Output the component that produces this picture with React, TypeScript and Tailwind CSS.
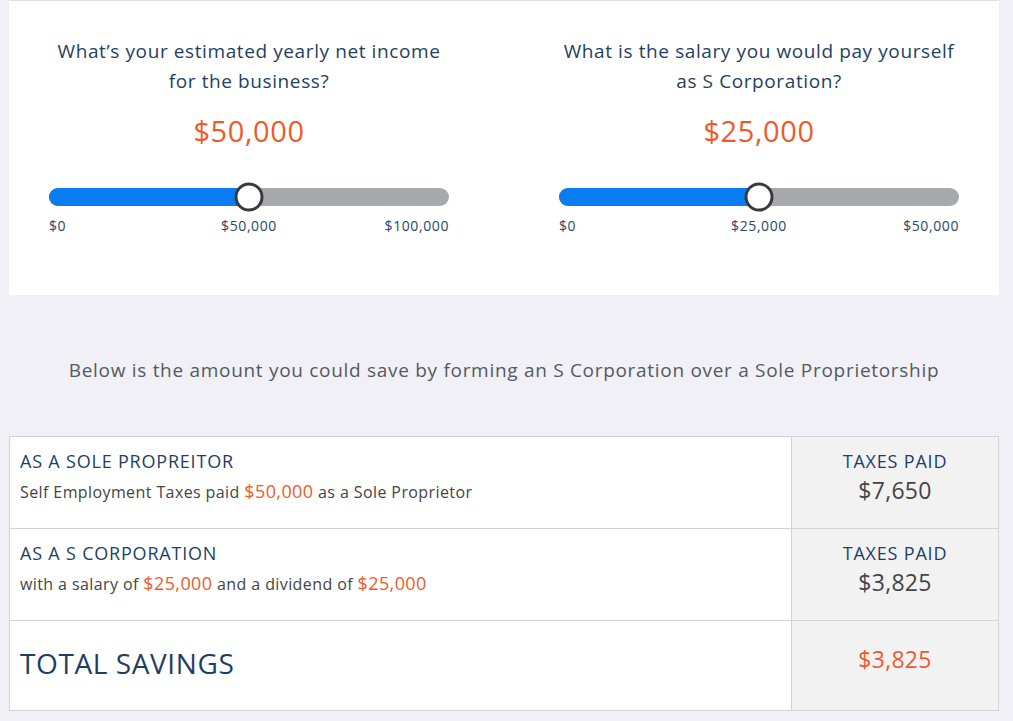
import React from "react";

const navy = "text-[#1e3f63]";

function Slider({ min, mid, max }: { min: string; mid: string; max: string }) {
  return (
    <div className="w-[400px] mt-[39px]">
      <div className="relative h-[18px] w-full rounded-full bg-[#a7a9ac]">
        <div className="absolute left-0 top-0 h-full w-1/2 rounded-l-full bg-[#0a7cf2]" />
        <div className="absolute left-1/2 top-1/2 h-[29px] w-[29px] -translate-x-1/2 -translate-y-1/2 rounded-full border-[3px] border-[#3a3a3a] bg-white" />
      </div>
      <div className="relative mt-[11px] h-[18px] text-[14px] leading-[18px] tracking-[0.6px] text-[#2a4668]">
        <span className="absolute left-0">{min}</span>
        <span className="absolute left-1/2 -translate-x-1/2">{mid}</span>
        <span className="absolute right-0">{max}</span>
      </div>
    </div>
  );
}

function Question({ lines, amount, min, mid, max }: { lines: [string, string]; amount: string; min: string; mid: string; max: string }) {
  return (
    <div className="flex flex-col items-center pt-[35px]">
      <div className={`text-center text-[19px] leading-[30px] tracking-[0.6px] whitespace-nowrap ${navy}`}>
        {lines[0]}
        <br />
        {lines[1]}
      </div>
      <div className="mt-[17px] text-[29px] leading-[36px] tracking-[0.6px] text-[#f05a2b]">{amount}</div>
      <Slider min={min} mid={mid} max={max} />
    </div>
  );
}

const O = ({ children }: { children: React.ReactNode }) => (
  <span className="text-[18px] text-[#f05a2b]">{children}</span>
);

function TaxCell({ value }: { value: string }) {
  return (
    <div className="border-l border-[#d3d3da] bg-[#f2f2f3] pt-[13px] text-center">
      <div className={`text-[18px] leading-[22px] tracking-[0.8px] ${navy}`}>TAXES PAID</div>
      <div className="mt-[3px] text-[23px] leading-[30px] tracking-[0.3px] text-[#444]">{value}</div>
    </div>
  );
}

export default function App() {
  return (
    <div
      className="h-[721px] w-[1013px] bg-[#f0f0f6] px-[9px]"
      style={{ fontFamily: "'Open Sans', Lato, sans-serif" }}
    >
      <div className="grid h-[295px] w-[990px] grid-cols-[400px_400px] gap-x-[110px] border-t border-[#e2e2ea] bg-white pl-[40px]">
        <Question
          lines={["What’s your estimated yearly net income", "for the business?"]}
          amount="$50,000"
          min="$0"
          mid="$50,000"
          max="$100,000"
        />
        <Question
          lines={["What is the salary you would pay yourself", "as S Corporation?"]}
          amount="$25,000"
          min="$0"
          mid="$25,000"
          max="$50,000"
        />
      </div>

      <div className="flex h-[141px] w-[990px] items-center justify-center pt-[10px] text-[19px] tracking-[0.7px] text-[#555a61]">
        Below is the amount you could save by forming an S Corporation over a Sole Proprietorship
      </div>

      <div className="w-[990px] border border-[#d3d3da] bg-white">
        <div className="grid h-[92px] grid-cols-[781px_1fr] border-b border-[#d3d3da]">
          <div className="pl-[10px] pt-[13px]">
            <div className={`text-[18px] leading-[22px] tracking-[0.8px] ${navy}`}>AS A SOLE PROPREITOR</div>
            <div className="mt-[8px] text-[16px] leading-[22px] tracking-[0.4px] text-[#444]">
              Self Employment Taxes paid <O>$50,000</O> as a Sole Proprietor
            </div>
          </div>
          <TaxCell value="$7,650" />
        </div>
        <div className="grid h-[92px] grid-cols-[781px_1fr] border-b border-[#d3d3da]">
          <div className="pl-[10px] pt-[13px]">
            <div className={`text-[18px] leading-[22px] tracking-[0.8px] ${navy}`}>AS A S CORPORATION</div>
            <div className="mt-[8px] text-[16px] leading-[22px] tracking-[0.4px] text-[#444]">
              with a salary of <O>$25,000</O> and a dividend of <O>$25,000</O>
            </div>
          </div>
          <TaxCell value="$3,825" />
        </div>
        <div className="grid h-[89px] grid-cols-[781px_1fr]">
          <div className={`flex items-center pl-[10px] pb-[6px] text-[28px] tracking-[0.6px] ${navy}`}>TOTAL SAVINGS</div>
          <div className="flex items-start justify-center border-l border-[#d3d3da] bg-[#f2f2f3] pt-[23px] text-[23px] leading-[30px] tracking-[0.3px] text-[#f05a2b]">
            $3,825
          </div>
        </div>
      </div>
    </div>
  );
}
